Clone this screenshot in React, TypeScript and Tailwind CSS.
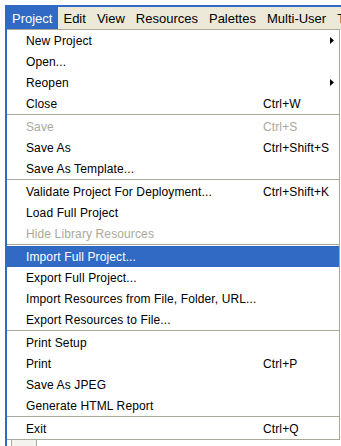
import { Fragment } from 'react';

type Item = {
  label: string;
  shortcut?: string;
  submenu?: boolean;
  disabled?: boolean;
  active?: boolean;
};

const groups: Item[][] = [
  [
    { label: 'New Project', submenu: true },
    { label: 'Open...' },
    { label: 'Reopen', submenu: true },
    { label: 'Close', shortcut: 'Ctrl+W' },
  ],
  [
    { label: 'Save', shortcut: 'Ctrl+S', disabled: true },
    { label: 'Save As', shortcut: 'Ctrl+Shift+S' },
    { label: 'Save As Template...' },
  ],
  [
    { label: 'Validate Project For Deployment...', shortcut: 'Ctrl+Shift+K' },
    { label: 'Load Full Project' },
    { label: 'Hide Library Resources', disabled: true },
  ],
  [
    { label: 'Import Full Project...', active: true },
    { label: 'Export Full Project...' },
    { label: 'Import Resources from File, Folder, URL...' },
    { label: 'Export Resources to File...' },
  ],
  [
    { label: 'Print Setup' },
    { label: 'Print', shortcut: 'Ctrl+P' },
    { label: 'Save As JPEG' },
    { label: 'Generate HTML Report' },
  ],
  [{ label: 'Exit', shortcut: 'Ctrl+Q' }],
];

const menus = ['Project', 'Edit', 'View', 'Resources', 'Palettes', 'Multi-User', 'Tools'];

function MenuRow({ item }: { item: Item }) {
  const color = item.active ? 'bg-[#316AC5] text-white' : item.disabled ? 'text-[#ACA899]' : 'text-black';
  return (
    <div className={`relative flex items-center h-[21px] pl-[19px] text-[12px] tracking-[0.12px] leading-none ${color}`}>
      <span className="w-[237px] whitespace-nowrap">{item.label}</span>
      {item.shortcut && <span className="whitespace-nowrap">{item.shortcut}</span>}
      {item.submenu && (
        <svg className="absolute right-[5px] top-[7px] w-[4px] h-[7px]" viewBox="0 0 4 7">
          <path d="M0 0 L4 3.5 L0 7 Z" fill={item.active ? '#fff' : '#000'} />
        </svg>
      )}
    </div>
  );
}

export default function App() {
  return (
    <div className="w-[341px] h-[446px] bg-white overflow-hidden pt-[5px] pl-[5px] font-['Liberation_Sans',Arial,sans-serif]">
      <div className="border-t-2 border-l-2 border-[#3169C6] h-full">
        <div className="flex h-[22px] bg-[#ECE9D8] text-[13px] leading-none whitespace-nowrap">
          {menus.map((m, i) => (
            <div
              key={m}
              className={`flex items-center pl-[5px] pr-[6px] ${i === 0 ? 'bg-[#316AC5] text-white' : 'text-black'}`}
            >
              {m}
            </div>
          ))}
        </div>
        <div className="w-[333px] bg-white border-t border-r border-b border-[#ACA899]">
          {groups.map((g, gi) => (
            <Fragment key={gi}>
              {gi > 0 && <div className="h-[2px] border-t border-[#ACA899] bg-white" />}
              {g.map((item) => (
                <MenuRow key={item.label} item={item} />
              ))}
            </Fragment>
          ))}
        </div>
        <div className="ml-[4px] w-[26px] h-[8px] border-l border-r border-[#ACA899] bg-[#F4F3EE]" />
      </div>
    </div>
  );
}
